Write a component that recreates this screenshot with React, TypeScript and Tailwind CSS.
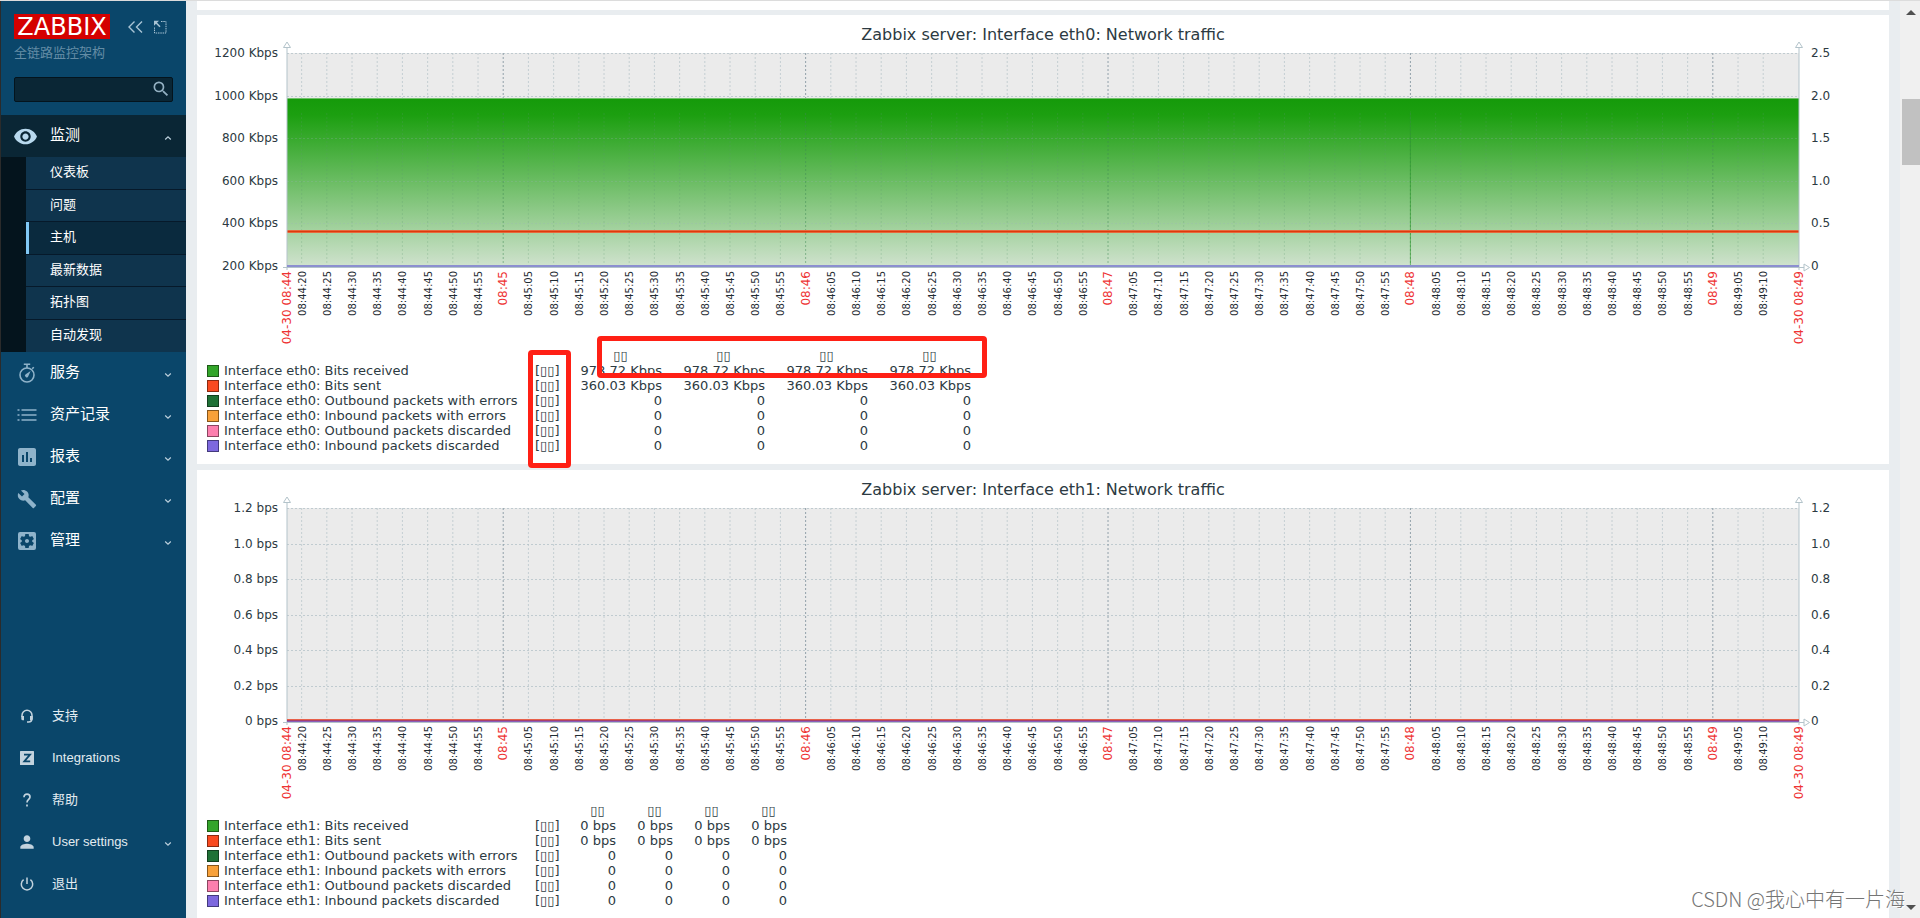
import React from "react";
import {
  MdVisibility,
  MdInsertChart,
  MdBuild,
  MdSettingsApplications,
  MdPerson,
  MdSearch,
} from "react-icons/md";

const UI_FONT = "font-['Liberation_Sans','Noto_Sans_CJK_SC',sans-serif]";

function Chevron({ up = false }: { up?: boolean }) {
  return (
    <svg className="mt-1 h-2 w-2 shrink-0" viewBox="0 0 8 8" fill="none" stroke="#bcd0dd" strokeWidth="1.2" aria-hidden="true">
      <path d={up ? "M1.2 5.5 L4 2.8 L6.8 5.5" : "M1.2 2.5 L4 5.2 L6.8 2.5"} />
    </svg>
  );
}

function StopwatchIcon() {
  return (
    <svg className="h-5 w-5" viewBox="0 0 20 20" fill="none" stroke="currentColor" aria-hidden="true">
      <circle cx="10" cy="12" r="7" strokeWidth="1.6" />
      <path d="M6.8 1.3h6.4M10 1.5v3.4M15.2 5.8l1.6-1.6" strokeWidth="1.6" />
      <path d="M13.6 8l-2.3 5.2a1.7 1.7 0 1 1-2.6-2z" fill="currentColor" stroke="none" />
    </svg>
  );
}

function ListIcon() {
  return (
    <svg className="h-5 w-5" viewBox="0 0 20 20" fill="none" stroke="currentColor" strokeWidth="1.6" aria-hidden="true">
      <path d="M0.5 5h2M0.5 10h2M0.5 15h2M4.5 5h15M4.5 10h15M4.5 15h15" />
    </svg>
  );
}

function HeadsetIcon() {
  return (
    <svg className="h-4 w-4" viewBox="0 0 16 16" fill="none" stroke="currentColor" strokeWidth="1.5" aria-hidden="true">
      <path d="M3 9V7.200a5 5 0 0 1 10 0V10.500c0 2.600-1 3.500-3.500 3.500H8" />
      <path d="M2.300 8h2.700v4.300H3.800A1.500 1.500 0 0 1 2.300 10.800zM13.700 8h-2.700v4.300h1.200a1.500 1.500 0 0 0 1.500-1.500z" fill="currentColor" stroke="none" />
    </svg>
  );
}

function ZIcon() {
  return (
    <svg className="h-[14px] w-[14px]" viewBox="0 0 14 14" aria-hidden="true">
      <rect width="14" height="14" rx="0.5" fill="currentColor" />
      <path d="M4 3.600h6L4.300 10.400H10.200" fill="none" stroke="#0a466a" strokeWidth="1.800" />
    </svg>
  );
}

function HelpIcon() {
  return (
    <svg className="h-4 w-4" viewBox="0 0 16 16" fill="none" stroke="currentColor" strokeWidth="1.700" aria-hidden="true">
      <path d="M5 5.200C5 3.200 6.300 2.200 8 2.200S11 3.300 11 4.900C11 7.300 8 7.400 8 10.400M8 12.400v2" />
    </svg>
  );
}

function PowerIcon() {
  return (
    <svg className="h-4 w-4" viewBox="0 0 16 16" fill="none" stroke="currentColor" strokeWidth="1.500" aria-hidden="true">
      <path d="M8 1.500v6.500M4.600 3.700a5.700 5.700 0 1 0 6.800 0" />
    </svg>
  );
}

const SUB_ITEMS = ["仪表板", "问题", "主机", "最新数据", "拓扑图", "自动发现"];

const MAIN_ITEMS = [
  { label: "服务", icon: <StopwatchIcon /> },
  { label: "资产记录", icon: <ListIcon /> },
  { label: "报表", icon: <MdInsertChart className="h-6 w-6" /> },
  { label: "配置", icon: <MdBuild className="h-5 w-5" /> },
  { label: "管理", icon: <MdSettingsApplications className="h-6 w-6" /> },
];

const FOOT_ITEMS = [
  { label: "支持", icon: <HeadsetIcon /> },
  { label: "Integrations", icon: <ZIcon /> },
  { label: "帮助", icon: <HelpIcon /> },
  { label: "User settings", icon: <MdPerson className="h-5 w-5" />, menu: true },
  { label: "退出", icon: <PowerIcon /> },
];

function Sidebar() {
  return (
    <aside className={`flex w-[186px] shrink-0 flex-col border-l border-[#2b2b2b] bg-[#0a466a] text-white ${UI_FONT}`}>
      <div className="px-[13px] pt-[13px]">
        <div className="flex items-center">
          <a href="#home" className="flex h-[25px] w-24 items-center justify-center bg-[#d40000] font-['DejaVu_Sans',sans-serif] text-[24px] leading-none text-white">
            ZABBIX
          </a>
          <button type="button" aria-label="收起" className="ml-4 text-[#a9c4d5]">
            <svg className="h-4 w-[18px]" viewBox="0 0 18 16" fill="none" stroke="currentColor" strokeWidth="1.400" aria-hidden="true">
              <path d="M8.500 2.500L3 8l5.500 5.500M16 2.500L10.500 8l5.500 5.500" />
            </svg>
          </button>
          <button type="button" aria-label="隐藏" className="ml-[9px] text-[#a9c4d5]">
            <svg className="h-[14px] w-[14px]" viewBox="0 0 14 14" fill="none" stroke="currentColor" aria-hidden="true">
              <path d="M8 1.500h5v11.500h-11.500v-5.500" strokeDasharray="1.500 0.800" />
              <path d="M1 0.800H6L1 5.800z" fill="currentColor" stroke="none" />
              <path d="M2.500 2.300l4.500 4.500" strokeWidth="1.600" />
            </svg>
          </button>
        </div>
        <div className="mt-1 text-[13px] leading-5 text-[#648ca5]">全链路监控架构</div>
      </div>
      <form className="relative mx-[13px] mt-[14px]" onSubmit={(e) => e.preventDefault()}>
        <input aria-label="搜索" className="block h-[25px] w-full rounded-[2px] border border-[#04141d] bg-[#0a2635] pr-7 pl-2 text-[13px] text-white outline-none" />
        <button type="submit" aria-label="搜索" className="absolute top-[2px] right-[2px] text-[#93b0c2]">
          <MdSearch className="h-5 w-5" />
        </button>
      </form>

      <nav className="mt-[13px]">
        <button type="button" className="flex h-[42px] w-full items-center bg-[#0a2635] pr-[14px] text-left text-[15px]">
          <span className="flex w-[49px] justify-center text-[#b8d9ee]">
            <MdVisibility className="h-[25px] w-[25px]" />
          </span>
          <span className="flex-1 pb-[2px]">监测</span>
          <Chevron up />
        </button>
        <div className="flex h-[195px] bg-[#04141d]">
          <ul className="ml-[25px] grid flex-1 grid-rows-6 bg-[#0f344d] text-[13px]">
            {SUB_ITEMS.map((s) => (
              <li key={s} className="border-b border-[#06192a] last:border-b-0">
                <a
                  href={"#" + s}
                  className={
                    s === "主机"
                      ? "flex h-full items-center border-l-[3px] border-[#81c8f5] bg-[#0a2a3e] pb-[2px] pl-[21px]"
                      : "flex h-full items-center pb-[2px] pl-6"
                  }
                >
                  {s}
                </a>
              </li>
            ))}
          </ul>
        </div>
        {MAIN_ITEMS.map((m) => (
          <button key={m.label} type="button" className="flex h-[42px] w-full items-center pr-[14px] text-left text-[15px]">
            <span className="flex w-[49px] justify-center pl-[2px] text-[#8fb3ca]">{m.icon}</span>
            <span className="flex-1 pb-[2px]">{m.label}</span>
            <Chevron />
          </button>
        ))}
      </nav>

      <nav className="mt-auto mb-[13px]">
        {FOOT_ITEMS.map((f) => (
          <a key={f.label} href={"#" + f.label} className="flex h-[42px] items-center pr-[14px] text-[13px] text-[#e3ebf0]">
            <span className="flex w-[51px] justify-center text-[#c3d3de]">{f.icon}</span>
            <span className="flex-1">{f.label}</span>
            {f.menu && <Chevron />}
          </a>
        ))}
      </nav>
    </aside>
  );
}

const START = 17.1;
const SPAN = 300;
const H = 213;
const pct = (sec: number) => ((sec - START) / SPAN) * 100 + "%";
const two = (n: number) => String(n).padStart(2, "0");

const TICKS = Array.from({ length: 59 }, (_, i) => {
  const sec = 20 + i * 5;
  const minute = 44 + Math.floor(sec / 60);
  const major = sec % 60 === 0;
  return { sec, major, label: major ? `08:${two(minute)}` : `08:${two(minute)}:${two(sec % 60)}` };
});

function TimeLabel({ x, label, major }: { x: string; label: string; major: boolean }) {
  return (
    <svg x={x} y={H} overflow="visible">
      <text
        transform="rotate(-90)"
        x="-5"
        y="4"
        textAnchor="end"
        className={major ? "fill-[#ee3333] text-[12px]" : "fill-[#1f2c33] text-[10px]"}
      >
        {label}
      </text>
    </svg>
  );
}

function Plot({ left, right, traffic }: { left: string[]; right: string[]; traffic: boolean }) {
  return (
    <svg className="mt-2 ml-[90px] block h-[296px] w-[calc(100%-180px)] overflow-visible" role="img" aria-label="Network traffic">
      <defs>
        <linearGradient id="received" x1="0" y1="0" x2="0" y2="1">
          <stop offset="0" stopColor="#159a0a" />
          <stop offset="0.1" stopColor="#1c9f10" />
          <stop offset="1" stopColor="#cfe2cd" />
        </linearGradient>
      </defs>
      <rect width="100%" height={H} fill="#ebebeb" />
      {traffic && (
        <>
          <rect y="45" width="100%" height={H - 45} fill="url(#received)" />
          <line x1="0" x2="100%" y1="45.5" y2="45.5" stroke="#6fbf69" />
        </>
      )}
      {left.slice(0, -1).map((l, i) => {
        const y = Math.round((H * i) / (left.length - 1)) + 0.5;
        return <line key={l} x1="0" x2="100%" y1={y} y2={y} stroke="#9db1ba" strokeOpacity={traffic && i > 1 ? 0.25 : 0.55} strokeDasharray="2 2" />;
      })}
      {TICKS.map((t) => (
        <g key={t.sec}>
          <line x1={pct(t.sec)} x2={pct(t.sec)} y1="0" y2={traffic ? 45 : H} stroke={t.major ? "#8899a3" : "#b4c2c8"} strokeOpacity={t.major ? 0.9 : 0.7} strokeDasharray="2 2" />
          {traffic && (
            <line x1={pct(t.sec)} x2={pct(t.sec)} y1="60" y2={H} stroke={t.major ? "#3f8a55" : "#5f9a72"} strokeOpacity={t.major ? 0.5 : 0.25} strokeDasharray="2 2" />
          )}
        </g>
      ))}
      {traffic && <line x1={pct(240)} x2={pct(240)} y1="58" y2={H} stroke="#2c9a2a" strokeOpacity="0.6" />}
      {traffic && (
        <>
          <line x1="0" x2="100%" y1="178.5" y2="178.5" stroke="#e8673c" strokeWidth="3" />
          <line x1="0" x2="100%" y1="178.5" y2="178.5" stroke="#dd3a0c" />
        </>
      )}
      <g stroke="#b3c3ca" fill="none">
        <line x1="0" x2="0" y1="-5" y2={H + 4} />
        <line x1="100%" x2="100%" y1="-5" y2={H + 4} />
        <line x1="-4" x2="100%" y1={H + 1.5} y2={H + 1.5} />
        <path d="M-3.500 -5.500h7L0 -11z" fill="#fff" />
        <svg x="100%" overflow="visible">
          <path d="M-3.500 -5.500h7L0 -11z" fill="#fff" />
          <path d={`M0 ${H + 1.5}h5M5 ${H - 2}v7l5.500-3.500z`} fill="#fff" />
        </svg>
      </g>
      {traffic ? (
        <line x1="0" x2="100%" y1={H} y2={H} stroke="#8c8fd0" strokeWidth="2" />
      ) : (
        <>
          <line x1="0" x2="100%" y1={H - 1.5} y2={H - 1.5} stroke="#e8604a" />
          <line x1="0" x2="100%" y1={H - 0.5} y2={H - 0.5} stroke="#a8406a" />
          <line x1="0" x2="100%" y1={H + 0.5} y2={H + 0.5} stroke="#8a5fb8" />
        </>
      )}
      {left.map((l, i) => (
        <text key={l} x="-9" y={Math.round((H * i) / (left.length - 1)) + 4} textAnchor="end" className="fill-[#2c3a42] text-[12px]">
          {l}
        </text>
      ))}
      <svg x="100%" overflow="visible">
        {right.map((r, i) => (
          <text key={r} x="12" y={Math.round((H * i) / (right.length - 1)) + 4} className="fill-[#2c3a42] text-[12px]">
            {r}
          </text>
        ))}
      </svg>
      <TimeLabel x="0" label="04-30 08:44" major />
      {TICKS.filter((t) => t.sec < 315).map((t) => (
        <TimeLabel key={t.sec} x={pct(t.sec)} label={t.label} major={t.major} />
      ))}
      <TimeLabel x="100%" label="04-30 08:49" major />
    </svg>
  );
}

const SERIES = [
  { name: "Bits received", swatch: "border-[#1d5a17] bg-[#33a52a]" },
  { name: "Bits sent", swatch: "border-[#8a2a12] bg-[#f94a20]" },
  { name: "Outbound packets with errors", swatch: "border-[#123f1f] bg-[#1f7136]" },
  { name: "Inbound packets with errors", swatch: "border-[#86561c] bg-[#f8a13a]" },
  { name: "Outbound packets discarded", swatch: "border-[#8a4660] bg-[#fc7fae]" },
  { name: "Inbound packets discarded", swatch: "border-[#433a7c] bg-[#7d68de]" },
];

function Legend({ iface, first, second, wide }: { iface: string; first: string; second: string; wide: boolean }) {
  const values = [first, second, "0", "0", "0", "0"];
  const col = wide ? "w-[103px]" : "w-[57px]";
  return (
    <table className={`ml-[10px] table-fixed border-collapse text-[13px] text-[#2c3a42] ${wide ? "w-[764px]" : "w-[580px]"}`}>
      <colgroup>
        <col className="w-[328px]" />
        <col className="w-6" />
        {[0, 1, 2, 3].map((c) => (
          <col key={c} className={col} />
        ))}
      </colgroup>
      <thead>
        <tr className="h-[14px] leading-[14px]">
          <th className="p-0" />
          <th className="p-0" />
          {[0, 1, 2, 3].map((c) => (
            <th key={c} className="p-0 pl-5 text-center font-normal">▯▯</th>
          ))}
        </tr>
      </thead>
      <tbody>
        {SERIES.map((s, i) => (
          <tr key={s.name} className="h-[15px] leading-[15px]">
            <td className="p-0 whitespace-nowrap">
              <span className="flex items-center gap-[5px]">
                <span className={`h-3 w-3 border ${s.swatch}`} />
                Interface {iface}: {s.name}
              </span>
            </td>
            <td className="p-0 whitespace-nowrap">[▯▯]</td>
            {[0, 1, 2, 3].map((c) => (
              <td key={c} className="p-0 text-right whitespace-nowrap">{values[i]}</td>
            ))}
          </tr>
        ))}
      </tbody>
    </table>
  );
}

function GraphCard({ iface, children, ...rest }: {
  iface: string;
  left: string[];
  right: string[];
  traffic: boolean;
  first: string;
  second: string;
  children?: React.ReactNode;
}) {
  return (
    <section className="relative shrink-0 bg-white pt-[10px] pb-[11px] font-['DejaVu_Sans',sans-serif]">
      <h2 className="text-center text-[16px] leading-5 text-[#2c3a42]">Zabbix server: Interface {iface}: Network traffic</h2>
      <Plot left={rest.left} right={rest.right} traffic={rest.traffic} />
      <Legend iface={iface} first={rest.first} second={rest.second} wide={rest.traffic} />
      {children}
    </section>
  );
}

function ScrollTrack() {
  return (
    <div className="flex w-5 shrink-0 flex-col items-end bg-[#f0f0f0]" aria-hidden="true">
      <svg className="mt-[9px] mr-1 h-[5px] w-[10px]" viewBox="0 0 10 5"><path d="M5 0l5 5H0z" fill="#505050" /></svg>
      <div className="mt-[84px] h-[66px] w-[18px] bg-[#c1c1c1]" />
      <svg className="mt-auto mr-1 mb-2 h-[5px] w-[10px]" viewBox="0 0 10 5"><path d="M5 5l5-5H0z" fill="#505050" /></svg>
    </div>
  );
}

export default function App() {
  return (
    <div className="relative flex h-screen overflow-hidden border-t border-[#dcdcdc] bg-[#e9edf0]">
      <Sidebar />
      <main className="flex min-w-0 flex-1 flex-col overflow-hidden px-[11px]">
        <div className="h-[9px] shrink-0 bg-white" />
        <div className="flex flex-col gap-[6px] pt-[5px]">
          <GraphCard
            iface="eth0"
            traffic
            left={["1200 Kbps", "1000 Kbps", "800 Kbps", "600 Kbps", "400 Kbps", "200 Kbps"]}
            right={["2.5", "2.0", "1.5", "1.0", "0.5", "0"]}
            first="978.72 Kbps"
            second="360.03 Kbps"
          >
            <div className="absolute top-[335px] left-[331px] h-[118px] w-[43px] rounded-[4px] border-[5px] border-[#ff2015]" />
            <div className="absolute top-[321px] left-[400px] h-[42px] w-[390px] rounded-[4px] border-[5px] border-[#ff2015]" />
          </GraphCard>
          <GraphCard
            iface="eth1"
            traffic={false}
            left={["1.2 bps", "1.0 bps", "0.8 bps", "0.6 bps", "0.4 bps", "0.2 bps", "0 bps"]}
            right={["1.2", "1.0", "0.8", "0.6", "0.4", "0.2", "0"]}
            first="0 bps"
            second="0 bps"
          />
        </div>
      </main>
      <ScrollTrack />
      <div className="pointer-events-none absolute right-[15px] bottom-[5px] font-['Noto_Sans_CJK_SC',sans-serif] text-[20px] leading-7 font-light text-[#757575] [text-shadow:1px_1px_0_#fff]">
        CSDN @我心中有一片海
      </div>
    </div>
  );
}
